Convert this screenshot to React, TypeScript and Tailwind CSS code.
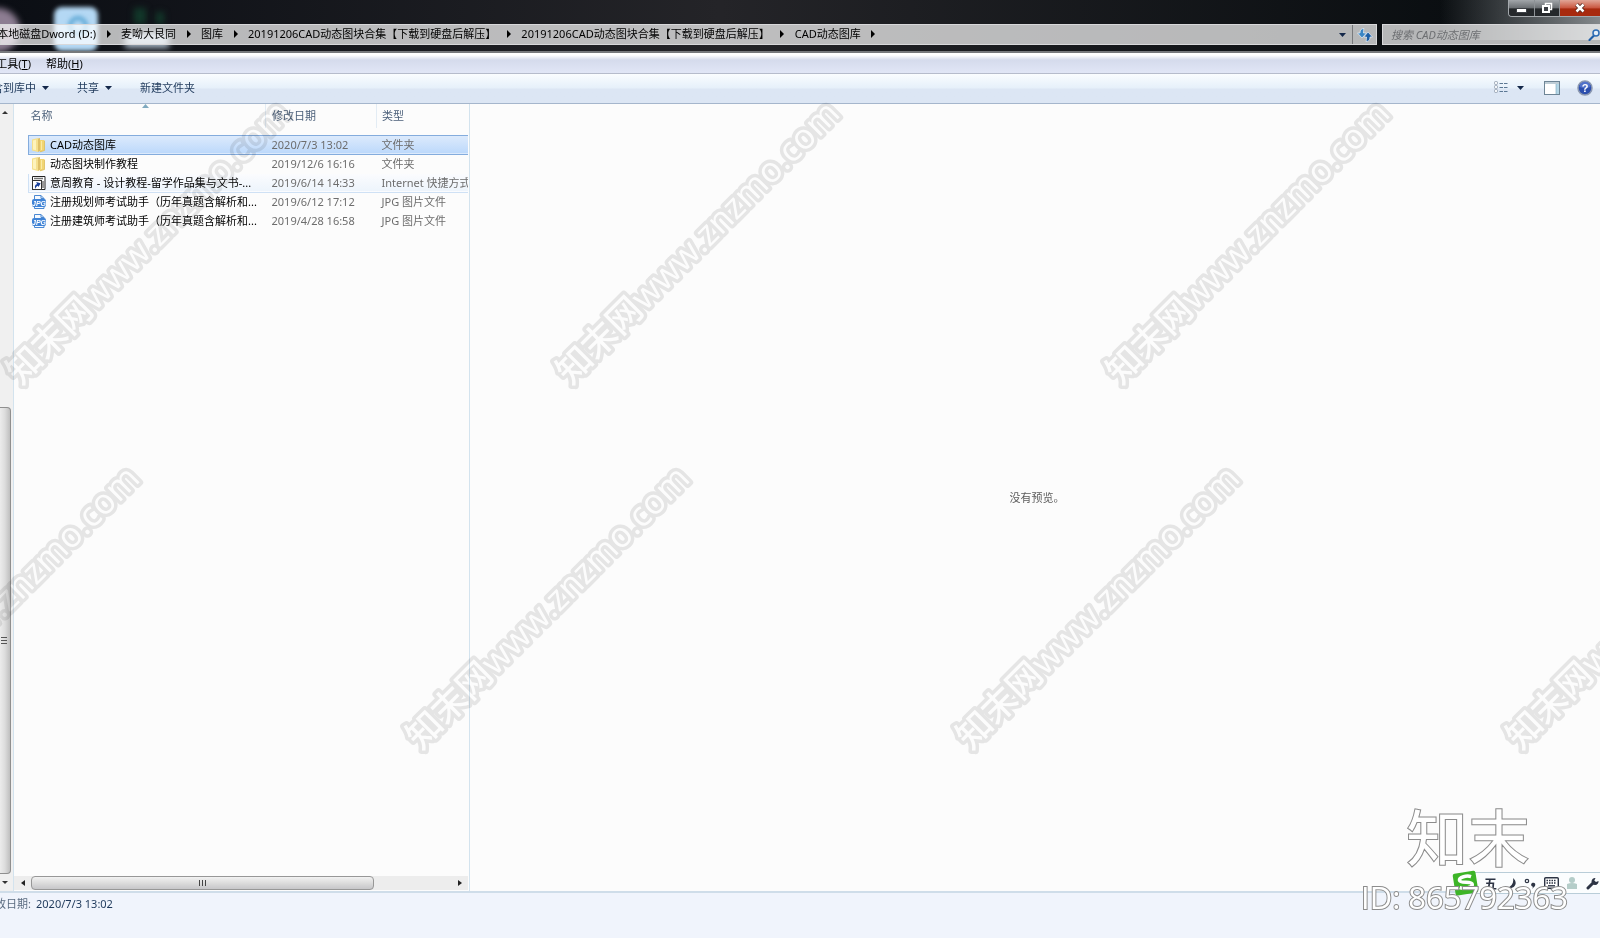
import React from 'react';

type FileKind = 'folder' | 'link' | 'jpg';

interface FileItem {
  id: number;
  name: string;
  date: string;
  type: string;
  kind: FileKind;
  state?: 'selected' | 'hover';
}

const files: FileItem[] = [
  { id: 1, name: 'CAD动态图库', date: '2020/7/3 13:02', type: '文件夹', kind: 'folder', state: 'selected' },
  { id: 2, name: '动态图块制作教程', date: '2019/12/6 16:16', type: '文件夹', kind: 'folder' },
  { id: 3, name: '意周教育 - 设计教程-留学作品集与文书-...', date: '2019/6/14 14:33', type: 'Internet 快捷方式', kind: 'link', state: 'hover' },
  { id: 4, name: '注册规划师考试助手（历年真题含解析和...', date: '2019/6/12 17:12', type: 'JPG 图片文件', kind: 'jpg' },
  { id: 5, name: '注册建筑师考试助手（历年真题含解析和...', date: '2019/4/28 16:58', type: 'JPG 图片文件', kind: 'jpg' },
];

const crumbs = [
  '麦呦大艮同',
  '图库',
  '20191206CAD动态图块合集【下载到硬盘后解压】',
  '20191206CAD动态图块合集【下载到硬盘后解压】',
  'CAD动态图库',
];

const watermarks = [
  { x: 21, y: 386 },
  { x: 571, y: 386 },
  { x: 1121, y: 386 },
  { x: -129, y: 751 },
  { x: 421, y: 751 },
  { x: 971, y: 751 },
  { x: 1521, y: 751 },
];

const CrumbArrow = () => (
  <span className="flex w-[25px] shrink-0 items-center justify-center">
    <svg width="4" height="8" viewBox="0 0 4 8">
      <path d="M0 0l4 4-4 4z" fill="#000" />
    </svg>
  </span>
);

const DownArrow = () => (
  <svg width="7" height="4" viewBox="0 0 7 4" className="shrink-0">
    <path d="M0 0h7L3.500 4z" fill="#14284a" />
  </svg>
);

const FileIcon = ({ kind }: { kind: FileKind }) => {
  if (kind === 'folder') {
    return (
      <svg width="14" height="16" viewBox="0 0 14 16" className="shrink-0">
        <path d="M0 2.500L6 1v14l-6-1.500z" fill="#f5e08e" />
        <path d="M6 1.500l2-.5v13l-2 1z" fill="#dfc068" />
        <path d="M8 3h4.500v10.500L8 15z" fill="#f1d573" />
        <path d="M12.500 4v9.500L8 14.800" fill="none" stroke="#dcbb5a" strokeWidth=".8" />
        <path d="M1 3.500l3-.8v10.600l-3-.8z" fill="#fdf3bd" />
        <path d="M9.500 4v9" stroke="#fbeaa5" />
      </svg>
    );
  }
  if (kind === 'link') {
    return (
      <svg width="14" height="16" viewBox="0 0 14 16" className="shrink-0">
        <path d="M.5 1.500h12.500v13H.5z" fill="#fff" stroke="#222" />
        <path d="M2 3.500h9M11 6v7" stroke="#777" strokeWidth="1.500" />
        <rect x=".5" y="5.500" width="9" height="9" fill="#fff" stroke="#333" />
        <path d="M2 13c0-3 1-4 3.500-4V7l3.500 3-3.500 2.500V11C4 11 3 11.500 2 13z" fill="#173f9c" transform="rotate(-25 5 10)" />
      </svg>
    );
  }
  return (
    <svg width="14" height="16" viewBox="0 0 14 16" className="shrink-0">
      <path d="M2.500 5V1.500h6.500l3 3V6M2.500 12v2.500H12V12" fill="#f4f9ff" stroke="#4a88d2" />
      <path d="M9 1.500v3h3" fill="none" stroke="#4a88d2" />
      <rect x="0" y="5" width="14" height="8" rx="2" fill="#3f83d6" />
      <text x="7" y="12" textAnchor="middle" fontSize="7" fontWeight="700" fontStyle="italic" fontFamily="Liberation Sans, sans-serif" fill="#fff">JPG</text>
    </svg>
  );
};

const TitleBar = () => (
  <div className="relative flex h-6 justify-end">
    <div className="flex h-[17px] overflow-hidden rounded-bl border-b border-l border-[#a5a9ad]">
      <button aria-label="最小化" className="flex w-[26px] items-center justify-center border-r border-[#8d9195] bg-linear-to-b from-[#a2a6aa] from-0% via-[#6b6f73] via-50% to-[#25282b] to-55%">
        <svg width="11" height="12" viewBox="0 0 11 12"><rect x=".5" y="6.500" width="10" height="4" fill="#fff" stroke="#3c3f44" /></svg>
      </button>
      <button aria-label="还原" className="flex w-[25px] items-center justify-center border-r border-[#8d9195] bg-linear-to-b from-[#a2a6aa] from-0% via-[#6b6f73] via-50% to-[#25282b] to-55%">
        <svg width="12" height="12" viewBox="0 0 12 12">
          <path d="M4.500 3V1.500h6v6H9" fill="none" stroke="#fff" strokeWidth="1.500" />
          <rect x="2" y="4" width="6" height="6" fill="#3c3f44" stroke="#fff" strokeWidth="2" />
        </svg>
      </button>
      <button aria-label="关闭" className="flex w-10 items-center justify-center bg-linear-to-b from-[#e0a597] from-0% via-[#c8553e] via-50% to-[#a82a0e] to-55%">
        <svg width="12" height="10" viewBox="0 0 12 10">
          <path d="M2.500 1.500l7 7M9.500 1.500l-7 7" stroke="#4a2018" strokeWidth="4" />
          <path d="M2.500 1.500l7 7M9.500 1.500l-7 7" stroke="#fff" strokeWidth="2.500" />
        </svg>
      </button>
    </div>
  </div>
);

const AddressBar = () => (
  <div className="relative flex h-[21px] gap-[5px] text-black">
    <nav aria-label="地址" className="flex min-w-0 flex-1 border border-[#d8d8da] bg-white/70">
      <div className="flex min-w-0 flex-1 items-center pb-[2px] whitespace-nowrap">
        <a href="#" className="flex w-[95px] shrink-0 justify-end">本地磁盘Dword (D:)</a>
        <CrumbArrow />
        {crumbs.map((crumb, index) => (
          <React.Fragment key={index}>
            <a href="#">{crumb}</a>
            <CrumbArrow />
          </React.Fragment>
        ))}
      </div>
      <button aria-label="以前的位置" className="flex w-5 items-center justify-center">
        <DownArrow />
      </button>
      <button aria-label="刷新" className="flex w-6 items-center justify-center border-l border-[#77797c]">
        <svg width="16" height="14" viewBox="0 0 16 14">
          <path d="M7 .5C4 .5 3 2 3 5H.5L5 10l4.500-5H6.500C6.500 3 6.500 2 7 .5z" fill="#3b86c4" stroke="#e6f1fa" strokeWidth=".7" />
          <path d="M9 13.500c3 0 4-1.500 4-4.500h2.500L11 4 6.800 9h2.700c0 2 0 3-.5 4.500z" fill="#1d5fa6" stroke="#e6f1fa" strokeWidth=".7" />
        </svg>
      </button>
    </nav>
    <form className="flex w-[218px] items-center border border-r-0 border-[#d8d8da] bg-white/70">
      <input
        type="text"
        aria-label="搜索"
        placeholder="搜索 CAD动态图库"
        className="min-w-0 flex-1 bg-transparent pl-2 italic outline-none placeholder:text-[#6d6f72]"
      />
      <button type="button" aria-label="搜索" className="w-3">
        <svg width="12" height="12" viewBox="0 0 12 12">
          <path d="M5.500 7L1.500 11" stroke="#1f5ea8" strokeWidth="2.200" strokeLinecap="round" />
          <circle cx="8" cy="4" r="3" fill="#e4eef8" stroke="#2c6cb4" strokeWidth="1.500" />
        </svg>
      </button>
    </form>
  </div>
);

const MenuBar = () => (
  <div className="flex h-[21px] items-center gap-[15px] border-b border-[#b6bccc] bg-linear-to-b from-white from-10% via-[#d5dbec] via-35% to-[#e1e6f6] pt-[2px] text-black">
    <button className="flex w-[31px] shrink-0 justify-end whitespace-nowrap">工具(<u>T</u>)</button>
    <button className="whitespace-nowrap">帮助(<u>H</u>)</button>
  </div>
);

const Toolbar = () => (
  <div className="flex h-[30px] items-center border-b border-[#a5b6cc] bg-linear-to-b from-[#fafdff] from-0% via-[#e6f0fa] via-48% to-[#dce6f4] to-52% pb-[2px] text-[#1e395b]">
    <button className="flex w-[49px] shrink-0 items-center justify-end gap-[6px] whitespace-nowrap">包含到库中<DownArrow /></button>
    <button className="ml-7 flex items-center gap-[6px]">共享<DownArrow /></button>
    <button className="ml-7">新建文件夹</button>
    <div className="ml-auto flex items-center pr-[7px]">
      <button aria-label="视图">
        <svg width="14" height="13" viewBox="0 0 14 13">
          <g fill="#f4f6f8" stroke="#8c98a8" strokeWidth=".8">
            <rect x=".5" y=".5" width="3" height="3" rx="1" />
            <rect x=".5" y="4.500" width="3" height="3" rx="1" />
            <rect x=".5" y="8.500" width="3" height="3" rx="1" />
          </g>
          <path d="M5.500 2.500h8M5.500 6.500h8M5.500 10.500h8" stroke="#5c7894" strokeDasharray="3.500 1" />
        </svg>
      </button>
      <button aria-label="更多视图选项" className="px-[9px]"><DownArrow /></button>
      <button aria-label="隐藏预览窗格" className="ml-[11px]">
        <svg width="16" height="14" viewBox="0 0 16 14">
          <rect x=".5" y=".5" width="15" height="13" fill="#fff" stroke="#6e8596" />
          <path d="M1 2h14" stroke="#a9bcc9" strokeWidth="1.500" />
          <rect x="12" y="3" width="3" height="10" fill="#b4d6e6" />
          <path d="M12 3v10" stroke="#7aa6bc" strokeWidth=".6" />
        </svg>
      </button>
      <button aria-label="获取帮助" className="ml-[17px]">
        <svg width="16" height="16" viewBox="0 0 16 16">
          <circle cx="8" cy="8" r="7" fill="#2c4fae" stroke="#8b98b0" strokeWidth="1.500" />
          <path d="M2.500 7a5.500 5.500 0 0 1 11 0C10 8.500 6 8.500 2.500 7z" fill="#6a8bdc" opacity=".6" />
          <text x="8" y="12" textAnchor="middle" fontSize="11" fontWeight="700" fontFamily="Liberation Sans, sans-serif" fill="#fff">?</text>
        </svg>
      </button>
    </div>
  </div>
);

const TreeScrollbar = () => (
  <div className="flex w-[14px] shrink-0 flex-col border-r border-[#d3e3ee] bg-[#f0f0f0] pr-[2px]">
    <div className="flex h-[17px] items-center pl-[2px]">
      <svg width="6" height="3" viewBox="0 0 6 3"><path d="M0 3h6L3 0z" fill="#333" /></svg>
    </div>
    <div className="flex-[287]"></div>
    <div className="flex flex-[466] items-center rounded-r-sm border border-l-0 border-[#8f8f8f] bg-linear-to-r from-[#ececec] via-[#dcdcdc] to-[#bfbfbf] pl-px">
      <svg width="6" height="7" viewBox="0 0 6 7"><path d="M0 .5h6M0 3.500h6M0 6.500h6" stroke="#555" /></svg>
    </div>
    <div className="flex h-[17px] items-center pl-[2px]">
      <svg width="6" height="3" viewBox="0 0 6 3"><path d="M0 0h6L3 3z" fill="#333" /></svg>
    </div>
  </div>
);

const ListScrollbar = () => (
  <div className="mt-auto mb-px flex h-[14px] items-stretch bg-[#ededed]">
    <div className="flex w-[17px] items-center justify-center">
      <svg width="4" height="6" viewBox="0 0 4 6"><path d="M4 0v6L0 3z" fill="#222" /></svg>
    </div>
    <div className="flex flex-[343] items-center justify-center rounded-sm border border-[#979797] bg-linear-to-b from-[#f2f2f2] from-0% via-[#dcdcdc] via-50% to-[#c6c6c9]">
      <svg width="7" height="6" viewBox="0 0 7 6"><path d="M.5 0v6M3.500 0v6M6.500 0v6" stroke="#444" /></svg>
    </div>
    <div className="flex-[78]"></div>
    <div className="flex w-[16px] items-center justify-center">
      <svg width="4" height="6" viewBox="0 0 4 6"><path d="M0 0v6l4-3z" fill="#222" /></svg>
    </div>
  </div>
);

const rowStyles = {
  selected: 'border-[#84acdd] bg-linear-to-b from-[#dceafc] to-[#bdd9fb]',
  hover: 'border-[#cfe1f5] bg-linear-to-b from-[#fbfcfe] to-[#edf4fc]',
  none: 'border-transparent',
};

const FileList = () => (
  <div className="flex w-[456px] shrink-0 flex-col border-r border-[#d3e3ee] pr-px">
    <div className="pl-[14px]">
      <table className="w-full table-fixed border-collapse">
        <thead>
          <tr className="h-[24px] text-left text-[#4c607a]">
            <th className="relative w-[237px] border-r border-[#e3ecf4] pl-[2px] font-normal">
              <svg width="7" height="4" viewBox="0 0 7 4" className="absolute top-0 left-[113px]"><path d="M0 4L3.500 0 7 4z" fill="#7fa9bf" /></svg>
              名称
            </th>
            <th className="w-[111px] border-r border-[#e3ecf4] pl-[6px] font-normal">修改日期</th>
            <th className="pl-[5px] font-normal">类型</th>
          </tr>
          <tr className="h-[7px]"><td colSpan={3}></td></tr>
        </thead>
        <tbody>
          {files.map((file) => (
            <tr key={file.id} className={`h-[19px] border-y ${rowStyles[file.state ?? 'none']}`}>
              <td className={`overflow-hidden p-0 whitespace-nowrap text-black ${file.state ? 'border-l border-inherit' : 'border-l border-transparent'}`}>
                <div className="flex h-[18px] items-center gap-1 pl-[3px]">
                  <FileIcon kind={file.kind} />
                  {file.name}
                </div>
              </td>
              <td className="overflow-hidden p-0 pl-[6px] whitespace-nowrap text-[#6d6d6d]">{file.date}</td>
              <td className="overflow-hidden p-0 pl-[5px] whitespace-nowrap text-[#6d6d6d]">{file.type}</td>
            </tr>
          ))}
        </tbody>
      </table>
    </div>
    <ListScrollbar />
  </div>
);

const InputMethodBar = () => (
  <div className="absolute right-0 bottom-[44px] flex h-[22px] w-[134px] items-center justify-between border-y border-[#b9cdd8] bg-[#fbfdfe] pr-px pl-[18px]">
    <svg width="28" height="28" viewBox="0 0 28 28" className="absolute -top-[4px] -left-[14px]">
      <g transform="rotate(-9 14 14)">
        <rect x="2" y="3" width="23" height="22" rx="2" fill="#3db527" />
        <path d="M20 8.500c-4-2-12-1.500-12 1.700 0 4 12 2 12 6 0 3.500-9 3.500-13 1.300" fill="none" stroke="#fff" strokeWidth="3.500" />
      </g>
    </svg>
    <span className="text-[13px] font-bold text-[#2d3444]">五</span>
    <svg width="12" height="13" viewBox="0 0 12 13"><path d="M8 1c5 4 3 11-6 10.500C7 9 9 6 8 1z" fill="#2d3444" /></svg>
    <svg width="12" height="12" viewBox="0 0 12 12">
      <circle cx="3" cy="4" r="1.700" fill="none" stroke="#2d3444" strokeWidth="1.200" />
      <path d="M8 6c2.500-1 4 .5 3 3L8 12c1-1.500 1-2 .5-2.500-1.500-.5-2-2.500-.5-3.500z" fill="#2d3444" />
    </svg>
    <svg width="15" height="12" viewBox="0 0 15 12">
      <rect x=".7" y=".7" width="13.600" height="10.600" rx="1" fill="#fff" stroke="#2d3444" strokeWidth="1.400" />
      <path d="M2.500 3.500h10M2.500 6h10" stroke="#2d3444" strokeWidth="1.400" strokeDasharray="1.500 1" />
      <path d="M4 8.800h7" stroke="#2d3444" strokeWidth="1.400" />
    </svg>
    <svg width="12" height="14" viewBox="0 0 12 14">
      <circle cx="6" cy="4" r="3" fill="#b5cdc9" />
      <path d="M1 8c3-1.500 7-1.500 10 0v5H1z" fill="#b5cdc9" />
    </svg>
    <svg width="13" height="13" viewBox="0 0 13 13">
      <path d="M2 11l4.500-4.500" stroke="#2d3444" strokeWidth="3" strokeLinecap="round" />
      <path d="M9.500 1A3.500 3.500 0 1 0 12.500 4L10 5 8.300 3.500z" fill="#2d3444" />
    </svg>
  </div>
);

const Watermarks = () => (
  <svg className="pointer-events-none absolute inset-0 h-full w-full mix-blend-multiply" fontFamily="'Open Sans', 'Noto Sans CJK SC', sans-serif">
    {watermarks.map((mark) => (
      <text
        key={`${mark.x}-${mark.y}`}
        transform={`translate(${mark.x} ${mark.y}) rotate(-45)`}
        fontSize="35"
        fontWeight="500"
        fill="#fff"
        stroke="#e8e8e8"
        strokeWidth="7"
        strokeLinejoin="round"
        paintOrder="stroke"
      >
        知末网www.znzmo.com
      </text>
    ))}
  </svg>
);

const App = () => {
  return (
    <div className="relative flex h-screen flex-col overflow-hidden bg-[#fcfcfc] font-['Noto_Sans','Noto_Sans_CJK_SC',sans-serif] text-[11px] leading-4">
      <header className="relative h-[53px] shrink-0 overflow-hidden border-b-2 border-[#77797c] bg-linear-to-r from-[#0b0e14] via-[#242428] via-45% to-[#060a0d]">
        {/* desktop icons showing through the glass frame */}
        <div className="absolute top-2 -left-6 h-11 w-11 rounded-full bg-[#8d7d92] blur-[3px]"></div>
        <div className="absolute top-[7px] left-[54px] h-11 w-11 rounded-lg bg-[#b4d8f4] blur-[2px]"></div>
        <div className="absolute top-4 left-[68px] h-5 w-5 rounded-full border-4 border-[#5ba6d4] blur-[2px]"></div>
        <div className="absolute top-2 left-[134px] h-4 w-3 bg-[#12382a] blur-[3px]"></div>
        <div className="absolute top-3 left-[156px] h-3 w-2 bg-[#12382a] blur-[3px]"></div>
        <div className="absolute top-8 left-[125px] h-4 w-11 bg-[#a9b9c8] blur-[3px]"></div>
        <div className="absolute top-0 right-0 h-10 w-40 bg-linear-to-r from-transparent to-[#84898c]"></div>
        <TitleBar />
        <AddressBar />
      </header>
      <MenuBar />
      <Toolbar />
      <main className="flex min-h-0 flex-1">
        <TreeScrollbar />
        <FileList />
        <section className="flex flex-1 items-center justify-center pl-1 text-[#5c5c5c]">没有预览。</section>
      </main>
      <footer className="flex h-[47px] shrink-0 gap-[5px] border-t-2 border-[#cfdde9] bg-[#f0f4fc] pt-[3px]">
        <span className="flex w-[31px] shrink-0 justify-end whitespace-nowrap text-[#5a6b80]">修改日期:</span>
        <span className="text-[#1e395b]">2020/7/3 13:02</span>
      </footer>
      <InputMethodBar />
      <Watermarks />
      <svg className="pointer-events-none absolute right-0 bottom-0" width="250" height="140" viewBox="0 0 250 140" fill="#fff" stroke="#8c8c8c">
        <text x="56" y="64" fontSize="62" fontWeight="500" fontFamily="'Noto Sans CJK SC', sans-serif" fillOpacity=".85">知末</text>
        <text x="11" y="111" fontSize="31" fontFamily="'Open Sans', sans-serif" strokeWidth="2" paintOrder="stroke">ID: 865792363</text>
      </svg>
    </div>
  );
};

export default App;
